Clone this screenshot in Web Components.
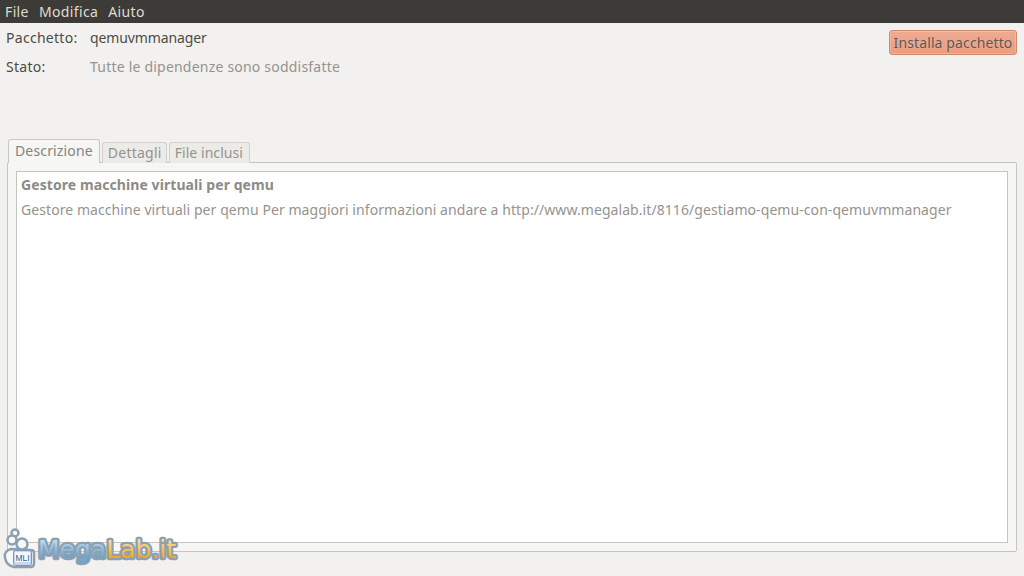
<!DOCTYPE html>
<html lang="it">
<head>
<meta charset="utf-8">
<title>qemuvmmanager</title>
<style>
  html, body { margin: 0; height: 100%; }
  body {
    width: 1024px; height: 576px; overflow: hidden;
    background: #f2f1ef; color: #3c3b37;
    font: 14px/17px "Noto Sans", sans-serif;
    display: flex; flex-direction: column;
    position: relative;
  }
</style>
</head>
<body>
<gdebi-menubar>
  <span>File</span><span>Modifica</span><span>Aiuto</span>
</gdebi-menubar>
<gdebi-header package="qemuvmmanager" status="Tutte le dipendenze sono soddisfatte" action="Installa pacchetto"></gdebi-header>
<gdebi-tabs>
  <span slot="tabs" class="active" style="letter-spacing:.15px">Descrizione</span>
  <span slot="tabs" style="letter-spacing:.25px;padding:0 4px 0 5px">Dettagli</span>
  <span slot="tabs" style="letter-spacing:.05px;padding:0 6px 0 5px">File inclusi</span>
  <b>Gestore macchine virtuali per qemu</b>
  <p>Gestore macchine virtuali per qemu Per maggiori informazioni andare a http://www.megalab.it/8116/gestiamo-qemu-con-qemuvmmanager</p>
</gdebi-tabs>
<megalab-logo></megalab-logo>

<script>
class GdebiMenubar extends HTMLElement {
  constructor() {
    super();
    this.attachShadow({ mode: 'open' });
    this.shadowRoot.innerHTML = `
      <style>
        :host {
          display: flex; gap: 10px; height: 23px; padding: 0 5px;
          align-items: center; box-sizing: border-box;
          background: #3c3b37; color: #dfdbd2;
          font-size: 14px; letter-spacing: .37px;
        }
      </style>
      <slot></slot>`;
  }
}

class GdebiHeader extends HTMLElement {
  constructor() {
    super();
    this.attachShadow({ mode: 'open' });
    this.shadowRoot.innerHTML = `
      <style>
        :host {
          display: flex; justify-content: space-between; align-items: flex-start;
          height: 117px; box-sizing: border-box; padding: 6px 7px 0 6px;
        }
        .info { display: grid; grid-template-columns: 84px auto; row-gap: 12px; }
        .label { letter-spacing: .28px; color: #4c4b46; }
        .pkg { letter-spacing: -.12px; color: #4c4b46; }
        .dim { color: #95938e; letter-spacing: .21px; }
        button {
          font: inherit; letter-spacing: .12px; color: #5c5a56;
          height: 25px; width: 128px; padding: 0; margin-top: 1px;
          border: 1px solid #cf8a6e; border-radius: 3px;
          background: linear-gradient(#f0aa90, #eb9c7f);
          box-shadow: inset 0 0 0 1px rgba(255,255,255,.2);
          text-shadow: 0 0 2px rgba(255,255,255,.25);
        }
      </style>
      <div class="info">
        <span class="label">Pacchetto:</span><span id="pkg" class="pkg"></span>
        <span class="label">Stato:</span><span id="st" class="dim"></span>
      </div>
      <button id="act"></button>`;
  }
  connectedCallback() {
    this.shadowRoot.getElementById('pkg').textContent = this.getAttribute('package');
    this.shadowRoot.getElementById('st').textContent = this.getAttribute('status');
    this.shadowRoot.getElementById('act').textContent = this.getAttribute('action');
  }
}

class GdebiTabs extends HTMLElement {
  constructor() {
    super();
    this.attachShadow({ mode: 'open' });
    this.shadowRoot.innerHTML = `
      <style>
        :host { display: flex; flex-direction: column; flex: 1; padding: 0 7px 24px 7px; min-height: 0; color: #95938e; }
        .tabs { display: flex; gap: 2px; height: 23px; padding-left: 1px; align-items: flex-end; position: relative; z-index: 1; margin-bottom: -1px; }
        ::slotted(span) {
          box-sizing: border-box; height: 21px; padding: 0 5px; line-height: 20px;
          border: 1px solid #d3d1cc; border-bottom: 0; border-radius: 3px 3px 0 0;
          background: #ecebe8; color: #95938e;
        }
        ::slotted(span.active) {
          height: 24px; padding: 0 6px; line-height: 22px; background: #f6f6f4;
          border-color: #c9c7c2; color: #85837e;
        }
        .frame {
          flex: 1; box-sizing: border-box; padding: 8px;
          border: 1px solid #c6c4bf; border-radius: 2px; background: #f6f6f4;
          display: flex; min-height: 0;
        }
        .view {
          flex: 1; box-sizing: border-box; padding: 4px 4px;
          border: 1px solid #c6c4bf; background: #fff;
        }
      </style>
      <div class="tabs"><slot name="tabs"></slot></div>
      <div class="frame"><div class="view"><slot></slot></div></div>`;
  }
  connectedCallback() {
    const p = this.querySelector('p');
    p.style.cssText = 'margin:8px 0 0;color:#95938e;white-space:nowrap;letter-spacing:.07px';
    const b = this.querySelector('b');
    b.style.cssText = 'color:#8d8b86;display:block;letter-spacing:.08px';
  }
}

class MegalabLogo extends HTMLElement {
  constructor() {
    super();
    this.attachShadow({ mode: 'open' });
    this.shadowRoot.innerHTML = `
      <style>
        :host { position: absolute; left: 2px; top: 527px; width: 178px; height: 48px; display: block; }
        svg { display: block; }
        .word { paint-order: stroke; stroke: #8ca0b0; stroke-width: 4.5px; stroke-linejoin: round; }
      </style>
      <svg width="178" height="48" viewBox="0 0 178 48">
        <defs>
          <linearGradient id="blue" x1="0" y1="0" x2="0" y2="1">
            <stop offset="0" stop-color="#d6eaf6"/><stop offset=".75" stop-color="#68a5d0"/>
          </linearGradient>
          <linearGradient id="orange" x1="0" y1="0" x2="0" y2="1">
            <stop offset="0" stop-color="#fff0c0"/><stop offset=".75" stop-color="#f5a520"/>
          </linearGradient>
        </defs>
        <g fill="#f7f7f7" stroke="#8ca0b0" stroke-width="2.5">
          <circle cx="13" cy="6" r="3.5"/>
          <circle cx="10" cy="13" r="4.5"/>
          <circle cx="20" cy="17" r="5.5"/>
          <path d="M9 22c-5 1-7 5-6 9 1 5 4 8 9 9h16c3 0 4-1 4-3V26c0-2-1-3-3-3z"/>
        </g>
        <rect x="11.5" y="23.5" width="18" height="15" rx="2" fill="#c8d8ee" stroke="#7a94bf"/>
        <rect x="13" y="25" width="15" height="10" fill="#f4f8fd"/>
        <text x="20.5" y="33.5" font-family="Liberation Sans" font-size="8.5" fill="#44597e" text-anchor="middle">MLI</text>
        <text class="word" x="36" y="31" font-family="DejaVu Sans" font-size="24" textLength="138" lengthAdjust="spacingAndGlyphs"><tspan fill="url(#blue)">Mega</tspan><tspan fill="url(#orange)">Lab.it</tspan></text>
      </svg>`;
  }
}

customElements.define('gdebi-menubar', GdebiMenubar);
customElements.define('gdebi-header', GdebiHeader);
customElements.define('gdebi-tabs', GdebiTabs);
customElements.define('megalab-logo', MegalabLogo);
</script>
</body>
</html>
